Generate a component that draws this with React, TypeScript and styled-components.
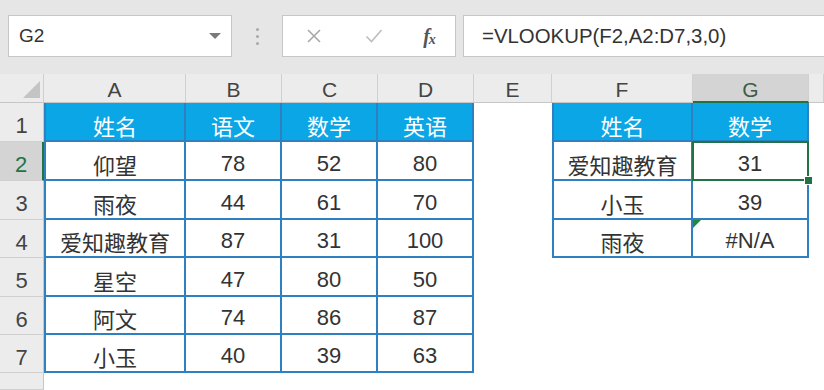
import React from 'react';
import styled, { createGlobalStyle } from 'styled-components';

const GlobalStyle = createGlobalStyle`
    html, body {
        margin: 0;
        padding: 0;
        background: #ffffff;
    }
    body {
        font-family: "Liberation Sans", "Noto Sans CJK SC", sans-serif;
    }
`;

const BLUE_LINE = '#2f80c0';
const BLUE_FILL = '#0ba6e6';
const GREEN = '#217346';

const Screen = styled.div`
    width: 824px;
    height: 390px;
    overflow: hidden;
    display: flex;
    flex-direction: column;
    background: #fff;
`;

const FormulaBar = styled.div`
    height: 74px;
    box-sizing: border-box;
    padding: 15px 0 0 8px;
    display: flex;
    align-items: flex-start;
    background: #e6e6e6;
`;

const NameBox = styled.div`
    width: 224px;
    height: 42px;
    box-sizing: border-box;
    border: 1px solid #c6c6c6;
    background: #fff;
    display: flex;
    align-items: center;
    justify-content: space-between;
    padding: 0 10px 0 10px;
    font-size: 19px;
    color: #333;
`;

const Caret = styled.span`
    width: 0;
    height: 0;
    border-left: 6px solid transparent;
    border-right: 6px solid transparent;
    border-top: 6px solid #7a7a7a;
`;

const Grip = styled.div`
    width: 50px;
    height: 42px;
    display: flex;
    flex-direction: column;
    align-items: center;
    justify-content: center;
    gap: 4px;
`;

const Dot = styled.span`
    width: 3px;
    height: 3px;
    border-radius: 50%;
    background: #a8a8a8;
`;

const ButtonBox = styled.div`
    width: 174px;
    height: 42px;
    box-sizing: border-box;
    border: 1px solid #c6c6c6;
    background: #fff;
    display: flex;
    align-items: center;
`;

const BarButton = styled.span<{ $w: number }>`
    width: ${p => p.$w}px;
    height: 100%;
    display: flex;
    align-items: center;
    justify-content: center;
`;

const FxLabel = styled.span`
    font-family: "Liberation Serif", serif;
    font-style: italic;
    font-weight: bold;
    font-size: 20px;
    color: #555;
    letter-spacing: -1px;

    sub {
        font-size: 14px;
        vertical-align: -1px;
    }
`;

const FormulaInput = styled.div`
    flex: 1;
    margin-left: 7px;
    height: 42px;
    box-sizing: border-box;
    border: 1px solid #c6c6c6;
    border-right: none;
    background: #fff;
    display: flex;
    align-items: center;
    padding-left: 18px;
    font-size: 20.4px;
    color: #333;
`;

const Sheet = styled.div`
    display: grid;
    grid-template-columns: 44px 142px 96px 96px 96px 78px 141px 116px 15px;
    grid-template-rows: 29px 39px 39px 39px 38px 39px 38px 38px 17px;
    font-size: 22px;
    color: #333;
`;

const Corner = styled.div`
    background: #ececec;
    border-right: 1px solid #cfcfcf;
    border-bottom: 1px solid #c6c6c6;
    display: flex;
    align-items: flex-end;
    justify-content: flex-end;
    padding: 0 3px 4px 0;
`;

const CornerMark = styled.span`
    width: 0;
    height: 0;
    border-left: 17px solid transparent;
    border-bottom: 17px solid #c4c4c4;
`;

const ColHeader = styled.div<{ $active?: boolean }>`
    box-sizing: border-box;
    background: ${p => (p.$active ? '#d4d4d4' : '#ececec')};
    border-right: 1px solid #d0d0d0;
    border-bottom: ${p => (p.$active ? `2px solid ${GREEN}` : '1px solid #c6c6c6')};
    display: flex;
    align-items: center;
    justify-content: center;
    padding-top: 4px;
    font-size: 21px;
    color: ${p => (p.$active ? '#3c5c4a' : '#444')};
`;

const RowHeader = styled.div<{ $active?: boolean }>`
    box-sizing: border-box;
    background: ${p => (p.$active ? '#d4d4d4' : '#ececec')};
    border-right: ${p => (p.$active ? `2px solid ${GREEN}` : '1px solid #c6c6c6')};
    border-bottom: 1px solid #d0d0d0;
    display: flex;
    align-items: center;
    justify-content: center;
    padding-top: 8px;
    font-size: 22px;
    color: ${p => (p.$active ? GREEN : '#444')};
`;

const Cell = styled.div<{ $head?: boolean; $boxed?: boolean; $left?: boolean }>`
    position: relative;
    box-sizing: border-box;
    background: ${p => (p.$head ? BLUE_FILL : '#fff')};
    color: ${p => (p.$head ? '#fff' : '#333')};
    border-right: ${p => (p.$boxed ? `2px solid ${BLUE_LINE}` : 'none')};
    border-bottom: ${p => (p.$boxed ? `2px solid ${BLUE_LINE}` : 'none')};
    border-left: ${p => (p.$left ? `2px solid ${BLUE_LINE}` : 'none')};
    display: flex;
    align-items: center;
    justify-content: center;
    padding-top: 6px;
    white-space: nowrap;
`;

const SelectionFrame = styled.span`
    position: absolute;
    z-index: 2;
    left: -1px;
    top: -1px;
    right: -2px;
    bottom: -2px;
    border: 2px solid ${GREEN};
    pointer-events: none;
`;

const FillHandle = styled.span`
    position: absolute;
    right: -6px;
    bottom: -6px;
    width: 7px;
    height: 7px;
    background: ${GREEN};
    border: 1px solid #fff;
`;

const ErrorMark = styled.span`
    position: absolute;
    left: 0;
    top: 0;
    width: 0;
    height: 0;
    border-top: 8px solid #1e8a3c;
    border-right: 8px solid transparent;
`;

const COLUMNS = ['A', 'B', 'C', 'D', 'E', 'F', 'G', ''];

const scores = [
    ['姓名', '语文', '数学', '英语'],
    ['仰望', '78', '52', '80'],
    ['雨夜', '44', '61', '70'],
    ['爱知趣教育', '87', '31', '100'],
    ['星空', '47', '80', '50'],
    ['阿文', '74', '86', '87'],
    ['小玉', '40', '39', '63'],
];

const lookup = [
    ['姓名', '数学'],
    ['爱知趣教育', '31'],
    ['小玉', '39'],
    ['雨夜', '#N/A'],
];

const App = () => {
    const rows = [1, 2, 3, 4, 5, 6, 7, 8];

    return (
        <Screen>
            <GlobalStyle />
            <FormulaBar>
                <NameBox>
                    <span>G2</span>
                    <Caret />
                </NameBox>
                <Grip>
                    <Dot />
                    <Dot />
                    <Dot />
                </Grip>
                <ButtonBox>
                    <BarButton $w={62}>
                        <svg width="16" height="16" viewBox="0 0 16 16">
                            <path d="M2 2 L14 14 M14 2 L2 14" stroke="#a9a9a9" strokeWidth="1.6" fill="none" />
                        </svg>
                    </BarButton>
                    <BarButton $w={58}>
                        <svg width="18" height="16" viewBox="0 0 18 16">
                            <path d="M1.5 8.5 L6.5 13.5 L16.5 2" stroke="#bdbdbd" strokeWidth="1.6" fill="none" />
                        </svg>
                    </BarButton>
                    <BarButton $w={52}>
                        <FxLabel>f<sub>x</sub></FxLabel>
                    </BarButton>
                </ButtonBox>
                <FormulaInput>=VLOOKUP(F2,A2:D7,3,0)</FormulaInput>
            </FormulaBar>

            <Sheet>
                <Corner>
                    <CornerMark />
                </Corner>
                {COLUMNS.map((c, i) => (
                    <ColHeader key={'h' + i} $active={c === 'G'}>{c}</ColHeader>
                ))}

                {rows.map(r => {
                    const left = scores[r - 1];
                    const right = lookup[r - 1];
                    return (
                        <React.Fragment key={r}>
                            <RowHeader $active={r === 2}>{r < 8 ? r : ''}</RowHeader>
                            {[0, 1, 2, 3].map(ci => (
                                <Cell
                                    key={'l' + ci}
                                    $head={r === 1}
                                    $boxed={!!left}
                                    $left={!!left && ci === 0}
                                >
                                    {left ? left[ci] : ''}
                                </Cell>
                            ))}
                            <Cell />
                            {[0, 1].map(ci => (
                                <Cell
                                    key={'r' + ci}
                                    $head={r === 1}
                                    $boxed={!!right}
                                    $left={!!right && ci === 0}
                                >
                                    {right ? right[ci] : ''}
                                    {r === 2 && ci === 1 && (
                                        <SelectionFrame>
                                            <FillHandle />
                                        </SelectionFrame>
                                    )}
                                    {r === 4 && ci === 1 && <ErrorMark />}
                                </Cell>
                            ))}
                            <Cell />
                        </React.Fragment>
                    );
                })}
            </Sheet>
        </Screen>
    );
};

export default App;
